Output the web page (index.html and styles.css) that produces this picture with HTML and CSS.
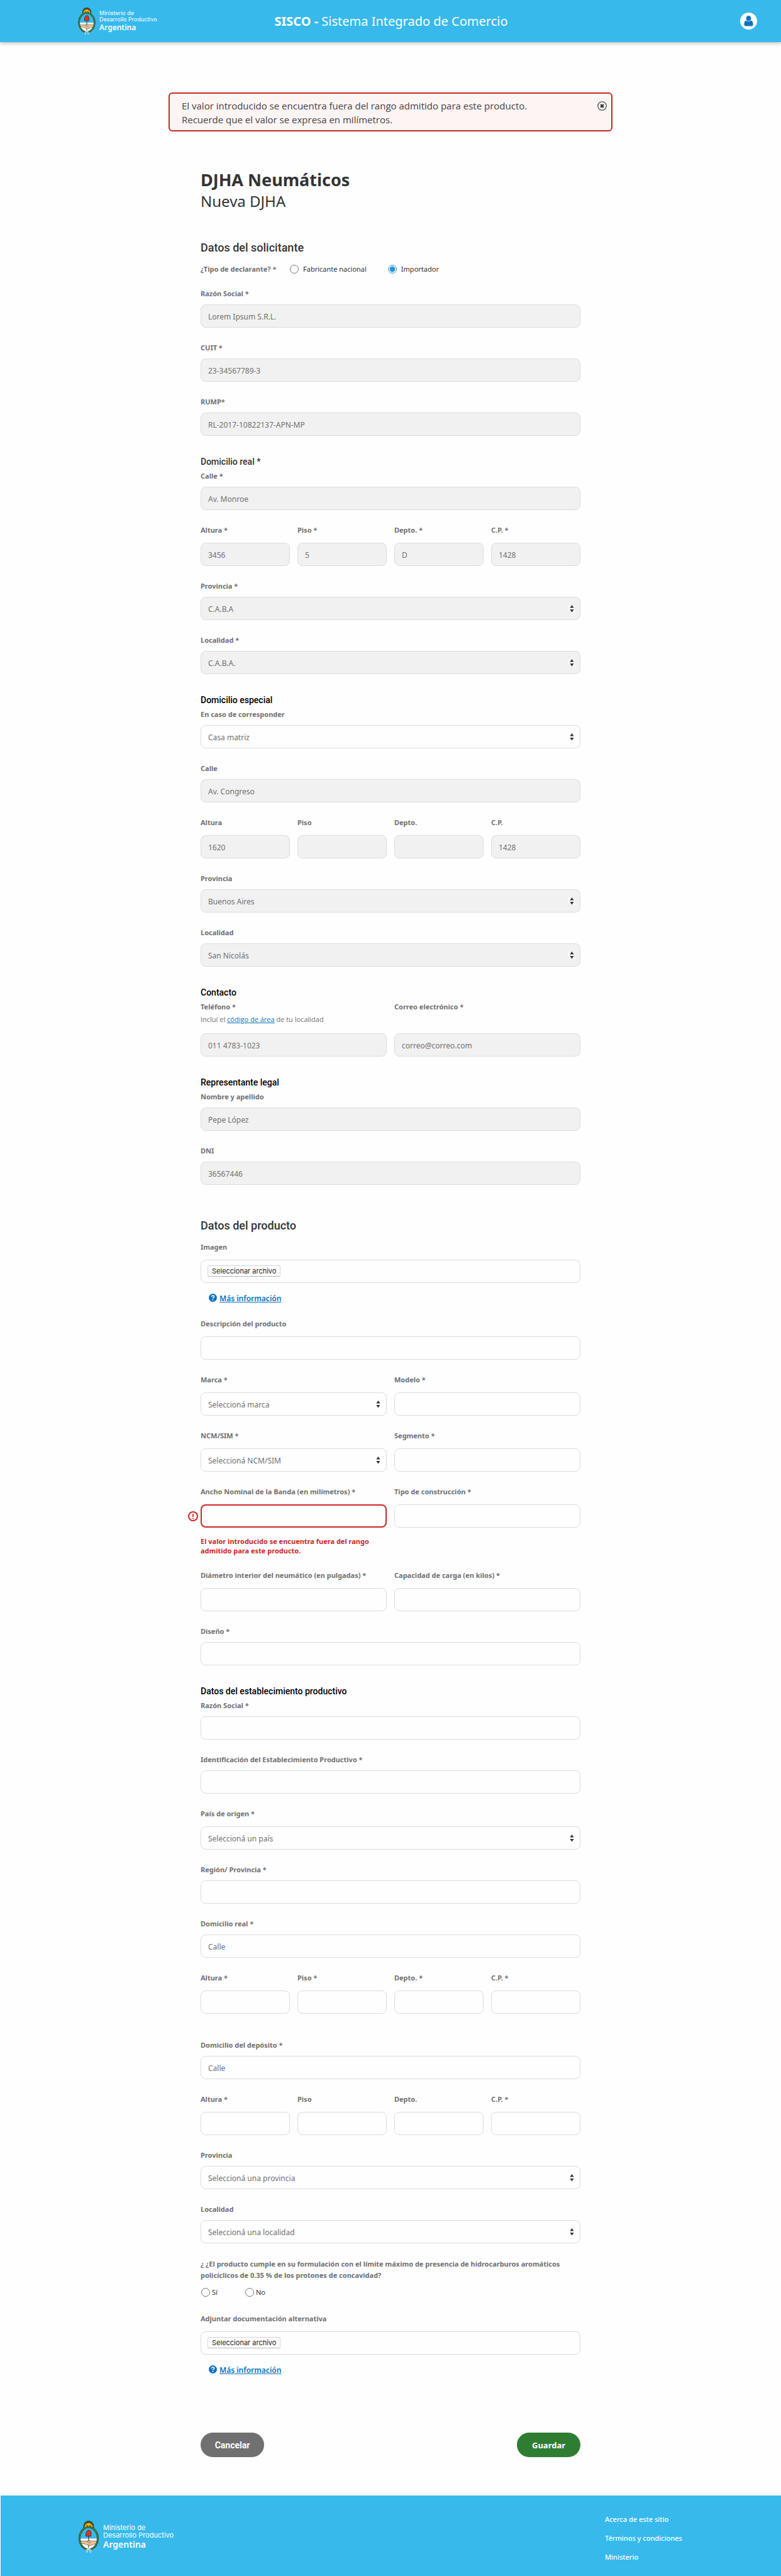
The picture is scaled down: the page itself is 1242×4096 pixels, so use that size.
FILE: index.html
```html
<!DOCTYPE html>
<html lang="es">
<head>
<meta charset="utf-8">
<meta name="viewport" content="width=device-width, initial-scale=1">
<title>SISCO - DJHA Neumáticos</title>
<link rel="stylesheet" href="styles.css">
</head>
<body>
<svg class="sprite" aria-hidden="true">
  <symbol id="emblem" viewBox="0 0 42 66">
    <path d="M10 14 11 7 14 2.500 18 .5 21 0 24 .5 28 2.500 31 7 32 14z" fill="#4a4a2a" stroke="#222" stroke-width="1" stroke-dasharray="1 1"/>
    <path d="M12 15a9 10.500 0 0 1 18 0z" fill="#f2b90f"/>
    <path d="M16.500 9.500h3M22.500 9.500h3" stroke="#5a3b00" stroke-width="1.500"/>
    <ellipse cx="21" cy="36.500" rx="18" ry="22.500" fill="#38b9eb"/>
    <path d="M3 37h36a18 22.500 0 0 1-36 0z" fill="#fff"/>
    <path d="M21 31v25" stroke="#333" stroke-width="1.500"/>
    <path d="M15 32c0-5 1-11 5-12.500 4-1 6.500 3 6 7v5.500z" fill="#e5311d" stroke="#222" stroke-width="1"/>
    <path d="M3 42c5 0 9 1 14 0l4-1.500 5 1.500h13v5c-5 1-9 2-12 4l-4 0-5-1c-4-2-9-3-14-3z" fill="#f3c391" stroke="#333" stroke-width=".8"/>
    <path d="M17 43l5 4M20 42l6 5" stroke="#333" stroke-width=".8"/>
    <ellipse cx="21" cy="36.500" rx="19" ry="23.500" fill="none" stroke="#20352a" stroke-width="4"/>
    <ellipse cx="21" cy="36.500" rx="19" ry="23.500" fill="none" stroke="#4fa053" stroke-width="2.500" stroke-dasharray="2.500 1"/>
    <path d="M17 59h8M20 60l-3 6M22 60l3 6M17 60l-2 3M25 60l2 3" stroke="#e8f6fd" stroke-width="1.500" fill="none"/>
  </symbol>
  <symbol id="help" viewBox="0 0 16 16">
    <circle cx="8" cy="8" r="8" fill="#0b72c0"/>
    <path d="M5.500 6.200C5.600 4.600 6.700 3.800 8.100 3.800c1.500 0 2.500.9 2.500 2.100C10.600 7.600 8.200 7.600 8.100 9.400" fill="none" stroke="#fff" stroke-width="1.900"/>
    <circle cx="8.100" cy="11.900" r="1.200" fill="#fff"/>
  </symbol>
</svg>

<header class="site-header">
  <a class="brand" href="#" aria-label="Ministerio de Desarrollo Productivo Argentina">
    <svg class="brand-emblem" aria-hidden="true"><use href="#emblem"/></svg>
    <span class="brand-text"><span>Ministerio de</span><span>Desarrollo Productivo</span><strong>Argentina</strong></span>
  </a>
  <p class="site-name"><strong>SISCO -</strong> Sistema Integrado de Comercio</p>
  <button class="user-button" type="button" aria-label="Mi cuenta">
    <svg viewBox="0 0 27 27" aria-hidden="true"><circle cx="13.500" cy="13.500" r="13.500" fill="#fff"/><path d="M13.500 5a4 4.300 0 0 1 0 8.600 4 4.300 0 0 1 0-8.600zM9.500 12.500c2.500 2.200 5.500 2.200 8 0 2 .5 3 2.500 3 5.500v1.500q0 2-2 2h-10q-2 0-2-2V18c0-3 1-5 3-5.500z" fill="#0b72c0"/></svg>
  </button>
</header>

<main>
  <div class="alert" role="alert">
    <p>El valor introducido se encuentra fuera del rango admitido para este producto.<br>Recuerde que el valor se expresa en milímetros.</p>
    <button class="alert-close" type="button" aria-label="Cerrar">
      <svg viewBox="0 0 16 16" aria-hidden="true"><circle cx="8" cy="8" r="7.200" fill="none" stroke="#333" stroke-width="1.200"/><path d="M5.500 5.500l5 5M10.500 5.500l-5 5" stroke="#333" stroke-width="2.400"/></svg>
    </button>
  </div>

  <form class="form">
    <h1>DJHA Neumáticos</h1>
    <p class="subtitle">Nueva DJHA</p>

    <h2>Datos del solicitante</h2>
    <div class="radio-row" role="radiogroup" aria-labelledby="tipo">
      <span class="label" id="tipo">¿Tipo de declarante? *</span>
      <label class="radio"><input type="radio" name="tipo" value="fabricante">Fabricante nacional</label>
      <label class="radio"><input type="radio" name="tipo" value="importador" checked>Importador</label>
    </div>
    <div class="field"><label for="razon">Razón Social *</label><input id="razon" type="text" value="Lorem Ipsum S.R.L." disabled></div>
    <div class="field"><label for="cuit">CUIT *</label><input id="cuit" type="text" value="23-34567789-3" disabled></div>
    <div class="field"><label for="rump">RUMP*</label><input id="rump" type="text" value="RL-2017-10822137-APN-MP" disabled></div>

    <h3 class="soft">Domicilio real *</h3>
    <div class="field"><label for="r-calle">Calle *</label><input id="r-calle" type="text" value="Av. Monroe" disabled></div>
    <div class="row four">
      <div class="field tall"><label for="r-altura">Altura *</label><input id="r-altura" type="text" value="3456" disabled></div>
      <div class="field tall"><label for="r-piso">Piso *</label><input id="r-piso" type="text" value="5" disabled></div>
      <div class="field tall"><label for="r-depto">Depto. *</label><input id="r-depto" type="text" value="D" disabled></div>
      <div class="field tall"><label for="r-cp">C.P. *</label><input id="r-cp" type="text" value="1428" disabled></div>
    </div>
    <div class="field"><label for="r-prov">Provincia *</label><select id="r-prov" disabled><option>C.A.B.A</option></select></div>
    <div class="field"><label for="r-loc">Localidad *</label><select id="r-loc" disabled><option>C.A.B.A.</option></select></div>

    <h3>Domicilio especial</h3>
    <div class="field"><label for="e-caso">En caso de corresponder</label><select id="e-caso"><option>Casa matriz</option></select></div>
    <div class="field"><label for="e-calle">Calle</label><input id="e-calle" type="text" value="Av. Congreso" disabled></div>
    <div class="row four">
      <div class="field tall"><label for="e-altura">Altura</label><input id="e-altura" type="text" value="1620" disabled></div>
      <div class="field tall"><label for="e-piso">Piso</label><input id="e-piso" type="text" disabled></div>
      <div class="field tall"><label for="e-depto">Depto.</label><input id="e-depto" type="text" disabled></div>
      <div class="field tall"><label for="e-cp">C.P.</label><input id="e-cp" type="text" value="1428" disabled></div>
    </div>
    <div class="field"><label for="e-prov">Provincia</label><select id="e-prov" disabled><option>Buenos Aires</option></select></div>
    <div class="field"><label for="e-loc">Localidad</label><select id="e-loc" disabled><option>San Nicolás</option></select></div>

    <h3>Contacto</h3>
    <div class="row two">
      <div class="field tall"><label for="tel">Teléfono *</label><p class="hint">Incluí el <a href="#">código de área</a> de tu localidad</p><input id="tel" type="tel" value="011 4783-1023" disabled></div>
      <div class="field tall"><label for="mail">Correo electrónico *</label><input id="mail" type="email" value="correo@correo.com" disabled></div>
    </div>

    <h3>Representante legal</h3>
    <div class="field"><label for="nombre">Nombre y apellido</label><input id="nombre" type="text" value="Pepe López" disabled></div>
    <div class="field"><label for="dni">DNI</label><input id="dni" type="text" value="36567446" disabled></div>

    <h2 class="section">Datos del producto</h2>
    <div class="field tall file"><label for="imagen">Imagen</label>
      <div class="file-box"><input id="imagen" type="file"><label class="file-button" for="imagen">Seleccionar archivo</label></div>
    </div>
    <p class="more"><svg aria-hidden="true"><use href="#help"/></svg><a href="#">Más información</a></p>
    <div class="field tall"><label for="desc">Descripción del producto</label><input id="desc" type="text"></div>
    <div class="row two">
      <div class="field tall"><label for="marca">Marca *</label><select id="marca"><option>Seleccioná marca</option></select></div>
      <div class="field tall"><label for="modelo">Modelo *</label><input id="modelo" type="text"></div>
    </div>
    <div class="row two">
      <div class="field tall"><label for="ncm">NCM/SIM *</label><select id="ncm"><option>Seleccioná NCM/SIM</option></select></div>
      <div class="field tall"><label for="segmento">Segmento *</label><input id="segmento" type="text"></div>
    </div>
    <div class="row two">
      <div class="field tall"><label for="ancho">Ancho Nominal de la Banda (en milímetros) *</label>
        <div class="invalid">
          <svg viewBox="0 0 16 16" aria-hidden="true"><circle cx="8" cy="8" r="7" fill="none" stroke="#cb2626" stroke-width="2"/><path d="M8 4v5M8 10.500v1.700" stroke="#cb2626" stroke-width="1.800"/></svg>
          <input id="ancho" type="text" aria-invalid="true" aria-describedby="ancho-error">
        </div>
        <p class="error" id="ancho-error">El valor introducido se encuentra fuera del rango admitido para este producto.</p>
      </div>
      <div class="field tall"><label for="construccion">Tipo de construcción *</label><input id="construccion" type="text"></div>
    </div>
    <div class="row two">
      <div class="field tall"><label for="diametro">Diámetro interior del neumático (en pulgadas) *</label><input id="diametro" type="text"></div>
      <div class="field tall"><label for="carga">Capacidad de carga (en kilos) *</label><input id="carga" type="text"></div>
    </div>
    <div class="field"><label for="diseno">Diseño *</label><input id="diseno" type="text"></div>

    <h3>Datos del establecimiento productivo</h3>
    <div class="field"><label for="p-razon">Razón Social *</label><input id="p-razon" type="text"></div>
    <div class="field"><label for="p-ident">Identificación del Establecimiento Productivo *</label><input id="p-ident" type="text"></div>
    <div class="field tall"><label for="p-pais">País de origen *</label><select id="p-pais"><option>Seleccioná un país</option></select></div>
    <div class="field"><label for="p-region">Región/ Provincia *</label><input id="p-region" type="text"></div>
    <div class="field"><label for="p-dom">Domicilio real *</label><input id="p-dom" type="text" placeholder="Calle"></div>
    <div class="row four">
      <div class="field tall"><label for="p-altura">Altura *</label><input id="p-altura" type="text"></div>
      <div class="field tall"><label for="p-piso">Piso *</label><input id="p-piso" type="text"></div>
      <div class="field tall"><label for="p-depto">Depto. *</label><input id="p-depto" type="text"></div>
      <div class="field tall"><label for="p-cp">C.P. *</label><input id="p-cp" type="text"></div>
    </div>
    <div class="field deposit"><label for="d-dom">Domicilio del depósito *</label><input id="d-dom" type="text" placeholder="Calle"></div>
    <div class="row four">
      <div class="field tall"><label for="d-altura">Altura *</label><input id="d-altura" type="text"></div>
      <div class="field tall"><label for="d-piso">Piso</label><input id="d-piso" type="text"></div>
      <div class="field tall"><label for="d-depto">Depto.</label><input id="d-depto" type="text"></div>
      <div class="field tall"><label for="d-cp">C.P. *</label><input id="d-cp" type="text"></div>
    </div>
    <div class="field"><label for="d-prov">Provincia</label><select id="d-prov"><option>Seleccioná una provincia</option></select></div>
    <div class="field"><label for="d-loc">Localidad</label><select id="d-loc"><option>Seleccioná una localidad</option></select></div>

    <fieldset class="question">
      <legend>¿ ¿El producto cumple en su formulación con el límite máximo de presencia de hidrocarburos aromáticos policíclicos de 0.35 % de los protones de concavidad?</legend>
      <div class="answers">
        <label class="radio"><input type="radio" name="cumple" value="si">Sí</label>
        <label class="radio"><input type="radio" name="cumple" value="no">No</label>
      </div>
    </fieldset>
    <div class="field tall file"><label for="adjunto">Adjuntar documentación alternativa</label>
      <div class="file-box"><input id="adjunto" type="file"><label class="file-button" for="adjunto">Seleccionar archivo</label></div>
    </div>
    <p class="more"><svg aria-hidden="true"><use href="#help"/></svg><a href="#">Más información</a></p>

    <div class="actions">
      <button class="button cancel" type="button">Cancelar</button>
      <button class="button save" type="submit">Guardar</button>
    </div>
  </form>
</main>

<footer class="site-footer">
  <a class="brand brand-large" href="#" aria-label="Ministerio de Desarrollo Productivo Argentina">
    <svg class="brand-emblem" aria-hidden="true"><use href="#emblem"/></svg>
    <span class="brand-text"><span>Ministerio de</span><span>Desarrollo Productivo</span><strong>Argentina</strong></span>
  </a>
  <nav class="footer-links">
    <a href="#">Acerca de este sitio</a>
    <a href="#">Términos y condiciones</a>
    <a href="#">Ministerio</a>
  </nav>
</footer>
</body>
</html>
```
FILE: styles.css
```css
*, *::before, *::after { box-sizing: border-box; }

body {
  margin: 0;
  background: #fefefe;
  color: #333;
  font-family: "Noto Sans", "Open Sans", sans-serif;
  font-size: 12px;
  line-height: 16px;
}

h1, h2, h3, p { margin: 0; }
button, input, select { font: inherit; }
button { cursor: pointer; }
.sprite { display: none; }

/* Header */
.site-header {
  display: grid;
  grid-template-columns: 1fr auto 1fr;
  align-items: center;
  height: 67px;
  padding: 0 38px 0 124px;
  background: #38b9eb;
  box-shadow: 0 2px 6px rgba(0, 0, 0, .25);
  color: #fff;
}
.site-name {
  grid-column: 2;
  margin-right: 84px;
  font-size: 20px;
  line-height: 28px;
  white-space: nowrap;
}
.user-button {
  justify-self: end;
  width: 27px;
  height: 27px;
  padding: 0;
  border: 0;
  background: none;
}
.user-button svg { display: block; width: 27px; height: 27px; }

.brand {
  display: flex;
  align-items: center;
  gap: 6px;
  color: #fff;
  text-decoration: none;
}
.brand-emblem { width: 28px; height: 43px; }
.brand-text {
  display: flex;
  flex-direction: column;
  font-family: Inter, sans-serif;
  font-size: 9px;
  line-height: 10px;
}
.brand-text strong {
  font-family: "Noto Sans", sans-serif;
  font-size: 12px;
  font-weight: 600;
  line-height: 16px;
}

/* Alert */
.alert {
  display: flex;
  justify-content: space-between;
  align-items: flex-start;
  width: 706px;
  max-width: 100%;
  margin: 80px auto 59px;
  padding: 8px 7px 6px 19px;
  border: 2px solid #cb2626;
  border-radius: 6px;
  background: #fdf4f4;
  color: #444;
  font-family: "Open Sans", sans-serif;
  font-size: 15px;
  line-height: 22px;
}
.alert-close {
  width: 15px;
  height: 15px;
  margin-top: 4px;
  padding: 0;
  border: 0;
  background: none;
}
.alert-close svg { display: block; width: 15px; height: 15px; }

/* Form */
.form { width: 604px; max-width: 100%; margin: 0 auto; }
h1 { font-size: 27px; line-height: 36px; }
.subtitle { font-size: 24px; line-height: 32px; }
h2, h3 { font-family: Roboto, sans-serif; font-weight: 500; }
h2 { margin: 46px 0 14px; font-size: 18px; line-height: 24px; }
h2.section { margin-top: 53px; }
h3 { margin: 31px 0 5px; color: #000; font-size: 14px; line-height: 20px; }
h3.soft { color: #333; }

.field { display: flex; flex-direction: column; margin-top: 24px; }
h2 + .field, h3 + .field, h3 + .row .field { margin-top: 0; }
.field.deposit { margin-top: 42px; }
.field > label, .label, .question legend {
  color: #707070;
  font-size: 11px;
  font-weight: 700;
  line-height: 16px;
}
.field > label { margin-bottom: 9px; }
.field.tall > label { margin-bottom: 12px; }

.row { display: grid; gap: 12px; }
.two { grid-template-columns: 1fr 1fr; }
.four { grid-template-columns: repeat(4, 1fr); }

input[type="text"], input[type="tel"], input[type="email"], select, .file-box {
  width: 100%;
  height: 37px;
  padding: 2px 11px 0;
  border: 1px solid #dcdcdc;
  border-radius: 8px;
  background-color: #fefefe;
  color: #707070;
  font-size: 12px;
}
input::placeholder { color: #707070; opacity: 1; }
input:disabled, select:disabled { background-color: #f1f1f1; color: #707070; opacity: 1; }
select {
  appearance: none;
  background-image: url("data:image/svg+xml,%3Csvg xmlns='http://www.w3.org/2000/svg' viewBox='70 40 66 76'%3E%3Cg fill='none' stroke='%23fefefe' stroke-width='8'%3E%3Ccircle cx='98' cy='73' r='19'/%3E%3Cpath d='M111 86l18 20'/%3E%3C/g%3E%3Cpath d='M92 72h28v10H92z' fill='%23fefefe'/%3E%3Cpath d='M90 71l15-22 15 22zM90 83h30l-15 21z' fill='%23333'/%3E%3C/svg%3E");
  background-repeat: no-repeat;
  background-position: right 6px center;
  background-size: 14px 16px;
}

.hint { margin: -8px 0 14px; color: #707070; font-family: "Open Sans", sans-serif; font-size: 11px; }
.hint a, .more a { color: #0b72c0; }
.two .field > input[type="email"] { margin-top: auto; }

.invalid { position: relative; }
.invalid input { display: block; border: 2px solid #cb2626; }
.invalid svg {
  position: absolute;
  top: 11px;
  left: -20px;
  width: 16px;
  height: 16px;
}
.error {
  margin-top: 14px;
  color: #cb2626;
  font-size: 11px;
  font-weight: 700;
  line-height: 15px;
}

/* Radios */
.radio-row { display: flex; align-items: center; margin-bottom: 23px; }
.radio-row + .field { margin-top: 0; }
.radio-row .label { width: 142px; }
.radio { display: flex; align-items: center; gap: 7px; font-size: 11px; line-height: 16px; }
.radio + .radio { margin-left: 34px; }
input[type="radio"] {
  appearance: none;
  width: 14px;
  height: 14px;
  margin: 0;
  border: 1px solid #777;
  border-radius: 50%;
  background: #fefefe;
}
input[type="radio"]:checked {
  border-color: #2897d8;
  background: radial-gradient(circle, #2897d8 4px, #fefefe 5px);
}

.question { min-width: 0; margin: 24px 0 26px; padding: 0; border: 0; }
.question legend { padding: 0; line-height: 18px; }
.answers { display: flex; margin-top: 10px; padding-left: 1px; }
.answers .radio { gap: 3px; }
.answers .radio + .radio { margin-left: 44px; }
.question + .field { margin-top: 0; }

/* File pickers */
.file-box { position: relative; display: flex; align-items: flex-start; padding: 8px 10px; }
.file-box input { position: absolute; width: 1px; height: 1px; opacity: 0; }
.file-button {
  padding: 0 6px;
  border: 1px solid #d6d6d6;
  border-bottom-color: #b8b8b8;
  border-radius: 3px;
  color: #222;
  font-family: Inter, sans-serif;
  font-size: 11px;
  line-height: 16px;
  cursor: pointer;
}
.more {
  display: flex;
  align-items: center;
  gap: 4px;
  margin: 15px 0 -2px 13px;
  font-size: 12px;
  font-weight: 600;
  line-height: 20px;
}
.more svg { width: 13px; height: 13px; margin-bottom: 3px; }

/* Actions */
.actions { display: flex; justify-content: space-between; margin: 91px 0 61px; }
.button {
  width: 101px;
  height: 39px;
  border: 0;
  border-radius: 20px;
  color: #fff;
  font-size: 13px;
  font-weight: 700;
}
.cancel { background: #707070; font-family: Roboto, sans-serif; font-size: 14px; }
.save { background: #2e7d33; }

/* Footer */
.site-footer {
  display: flex;
  justify-content: space-between;
  align-items: flex-start;
  height: 129px;
  margin-left: 1px;
  padding: 30px 150px 0 124px;
  background: #38b9eb;
  color: #fff;
}
.brand-large { gap: 7px; padding-top: 10px; }
.brand-large .brand-emblem { width: 32px; height: 51px; }
.brand-large .brand-text { font-size: 11px; line-height: 12px; }
.brand-large .brand-text strong { font-size: 14px; line-height: 18px; }
.footer-links { display: flex; flex-direction: column; gap: 14px; width: 130px; }
.footer-links a {
  color: #fff;
  font-size: 11px;
  font-weight: 500;
  line-height: 16px;
  text-decoration: none;
  white-space: nowrap;
}
```
